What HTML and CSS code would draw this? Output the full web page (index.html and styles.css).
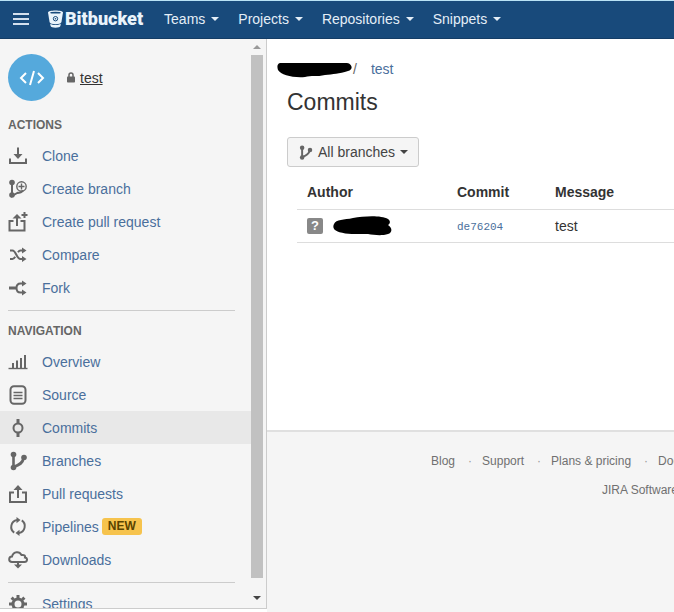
FILE: index.html
```
<!DOCTYPE html>
<html lang="en">
<head>
    <meta charset="UTF-8">
    <meta name="viewport" content="width=device-width, initial-scale=1.0">
    <title>test / Commits - Bitbucket</title>
    <link rel="stylesheet" href="styles.css">
</head>
<body>
    <header class="header">
        <button class="menu-button" aria-label="Menu">
            <svg width="18" height="14" viewBox="0 0 18 14" fill="none" stroke="#d3e0ee" stroke-width="2"><path d="M1 2h16M1 7h16M1 12h16"/></svg>
        </button>
        <a class="logo" href="#">
            <svg width="15" height="18" viewBox="0 0 15 18" fill="#eaf4fb">
                <path d="M0 2.6C0 1.2 3.4.5 7.5.5S15 1.2 15 2.6l-1.6 9.6c-.3 1.2-2.8 2-5.9 2s-5.600-.8-5.900-2z"/>
                <path d="M2.200 13.700c1.200.9 3.200 1.300 5.300 1.300s4.100-.4 5.300-1.300l-.4 2.400c-.2 1-2.400 1.700-4.900 1.700s-4.700-.7-4.900-1.700z"/>
                <ellipse cx="7.500" cy="2.700" rx="5.300" ry=".9" fill="#184a7b"/>
                <circle cx="7.500" cy="8.700" r="2.200" fill="none" stroke="#184a7b" stroke-width="1"/>
                <circle cx="7.500" cy="8.700" r=".8" fill="#184a7b"/>
            </svg>
            <span>Bitbucket</span>
        </a>
        <nav class="menu">
            <button class="menu-item">Teams</button>
            <button class="menu-item">Projects</button>
            <button class="menu-item">Repositories</button>
            <button class="menu-item">Snippets</button>
        </nav>
    </header>

    <div class="page">
        <aside class="sidebar">
            <div class="sidebar-body">
                <div class="repo">
                    <span class="avatar">
                        <svg width="26" height="16" viewBox="0 0 26 16" fill="none" stroke="#fff" stroke-width="2"><path d="M7 3L2 8l5 5M19 3l5 5-5 5M15 1l-4 14"/></svg>
                    </span>
                    <svg width="8" height="11" viewBox="0 0 8 11"><path d="M2 5V3a2 2 0 0 1 4 0v2" fill="none" stroke="#666" stroke-width="1.500"/><rect y="4.500" width="8" height="6" rx=".8" fill="#666"/></svg>
                    <a class="repo-name" href="#">test</a>
                </div>

                <h2 class="group-title">Actions</h2>
                <ul class="nav-list">
                    <li><a class="nav-link" href="#">
                        <svg class="icon" viewBox="0 0 20 20"><path d="M2 12.500V17h16v-4.500M10 1.500v9"/><path class="solid" d="M5.500 8h9L10 13z"/></svg>Clone</a></li>
                    <li><a class="nav-link" href="#">
                        <svg class="icon" viewBox="0 0 20 20"><path d="M4 4v13l6-3.500"/><circle class="solid" cx="4" cy="3.500" r="2.800"/><circle class="solid" cx="4" cy="16" r="2.800"/><circle class="thin" cx="13.500" cy="7.500" r="4.700"/><path class="thin" d="M13.500 4.500v6M10.500 7.500h6"/><path d="M9 14c3 0 5-1 6-2.500"/></svg>Create branch</a></li>
                    <li><a class="nav-link" href="#">
                        <svg class="icon" viewBox="0 0 20 20"><path d="M5.500 9H1.500v9.500h15V9h-4M9 14V5"/><path class="solid" d="M4.500 6.500L9 2l4.500 4.500z"/><path d="M16.500 0v6M13.500 3h6"/></svg>Create pull request</a></li>
                    <li><a class="nav-link" href="#">
                        <svg class="icon" viewBox="0 0 20 20"><path d="M2 5.500h2.500c3.500 0 4 8.500 8 8.500H15M2 14h2.500c1.200 0 2-1 2.700-2.200M10 7.200C10.700 6.200 11.500 5.500 12.500 5.500H15"/><path class="solid" d="M14 2.500l4.500 3-4.500 3zM14 11l4.500 3-4.500 3z"/></svg>Compare</a></li>
                    <li><a class="nav-link" href="#">
                        <svg class="icon" viewBox="0 0 20 20"><path d="M15 5.500h-2.500c-3 0-4 2-4 4.500s1 4.500 4 4.500H15"/><path class="thick" d="M1 10h7.500"/><path class="solid" d="M14 2.500l4.500 3-4.500 3zM14 11.500l4.500 3-4.500 3z"/></svg>Fork</a></li>
                </ul>
                <hr class="divider">

                <h2 class="group-title">Navigation</h2>
                <ul class="nav-list">
                    <li><a class="nav-link" href="#">
                        <svg class="icon" viewBox="0 0 20 20"><path class="thin" d="M.5 16.500h19"/><path d="M5 16v-5M9 16V8.500M13 16V6M17 16V3"/></svg>Overview</a></li>
                    <li><a class="nav-link" href="#">
                        <svg class="icon" viewBox="0 0 20 20"><rect x="2.500" y="1.200" width="15" height="17.500" rx="3.500"/><path class="thin" d="M5.500 7.500h9M5.500 10.500h9M5.500 13.500h9"/></svg>Source</a></li>
                    <li><a class="nav-link active" href="#" aria-current="page">
                        <svg class="icon" viewBox="0 0 20 20"><circle cx="10" cy="10" r="4.500"/><path class="thick" d="M10 1v4.500M10 14.500V19"/></svg>Commits</a></li>
                    <li><a class="nav-link" href="#">
                        <svg class="icon" viewBox="0 0 20 20"><path class="branch" d="M5.500 4v12c6-2 9.500-4 10-9"/><circle class="solid" cx="5.500" cy="3.500" r="2.800"/><circle class="solid" cx="5.500" cy="16.500" r="2.800"/><circle class="solid" cx="16" cy="6.500" r="2.800"/></svg>Branches</a></li>
                    <li><a class="nav-link" href="#">
                        <svg class="icon" viewBox="0 0 20 20"><path d="M6 8.500H2V18h16V8.500h-4M10 14V5"/><path class="solid" d="M5.500 6L10 1l4.500 5z"/></svg>Pull requests</a></li>
                    <li><a class="nav-link" href="#">
                        <svg class="icon" viewBox="0 0 20 20"><path d="M6.200 15.600A7 7 0 0 1 9 3M13.800 3.400A7 7 0 0 1 11 16"/><path class="solid" d="M8.500 0l4 3-4 3.200zM11.500 12.800v6.200l-4-3z"/></svg>Pipelines<span class="badge">New</span></a></li>
                    <li><a class="nav-link" href="#">
                        <svg class="icon" viewBox="0 0 20 20"><path d="M7 12H4a2.800 2.800 0 0 1 0-5.600C5.500 1 11.500 1 13.500 5c3-.5 4 1 3.500 2.500 3 .5 2.500 4.500-.5 4.500H13M5.500 12h9M10 12v4"/><path class="solid" d="M6 14.500h8L10 18.500z"/></svg>Downloads</a></li>
                </ul>
                <hr class="divider">

                <ul class="nav-list">
                    <li><a class="nav-link" href="#">
                        <svg class="icon" viewBox="0 0 20 20"><circle class="thick" cx="10" cy="10" r="5"/><path class="thick" d="M10 1v3M10 16v3M1 10h3M16 10h3M3.600 3.600l2.200 2.200M14.200 14.200l2.200 2.200M3.600 16.400l2.200-2.200M14.200 5.800l2.200-2.200"/></svg>Settings</a></li>
                </ul>
            </div>
            <div class="scrollbar" aria-hidden="true">
                <span class="arrow-up"></span>
                <span class="thumb"></span>
                <span class="arrow-down"></span>
            </div>
        </aside>

        <div class="content">
            <main class="main">
                <div class="breadcrumbs">
                    <svg width="75" height="16" viewBox="0 0 75 16"><path d="M3 1h67c6 1 6 7 1 8-9 3-15 3-23 4-8 2-14 0-20 2C16 16 4 13 1 8 0 5 0 2 3 1z"/></svg>
                    <span class="slash">/</span>
                    <a href="#">test</a>
                </div>
                <h1>Commits</h1>
                <button class="branch-button">
                    <svg class="icon-small" viewBox="0 0 20 20"><path class="branch" d="M5.500 4v12c6-2 9.500-4 10-9"/><circle class="solid" cx="5.500" cy="3.500" r="3"/><circle class="solid" cx="5.500" cy="16.500" r="3"/><circle class="solid" cx="16" cy="6.500" r="3"/></svg>
                    All branches
                </button>
                <table class="commits">
                    <thead>
                        <tr>
                            <th class="author">Author</th>
                            <th class="commit">Commit</th>
                            <th>Message</th>
                        </tr>
                    </thead>
                    <tbody>
                        <tr>
                            <td>
                                <div class="user">
                                    <span class="user-icon">?</span>
                                    <svg width="59" height="20" viewBox="0 0 59 20"><path d="M1 8C3 3 11 4 20 2 31 0 48-1 55 3c3 2 2 5 0 6 5 3 4 8 0 9-6 2-14 1-20 0-10 0-26 1-33-4C0 12 0 10 1 8z"/></svg>
                                </div>
                            </td>
                            <td><a class="hash" href="#">de76204</a></td>
                            <td>test</td>
                        </tr>
                    </tbody>
                </table>
            </main>

            <footer class="footer">
                <ul class="footer-links">
                    <li><a href="#">Blog</a></li>
                    <li><a href="#">Support</a></li>
                    <li><a href="#">Plans &amp; pricing</a></li>
                    <li><a href="#">Documentation</a></li>
                </ul>
                <ul class="footer-links products">
                    <li><a href="#">JIRA Software</a></li>
                </ul>
            </footer>
        </div>
    </div>
</body>
</html>
```
FILE: styles.css
```
* {
    box-sizing: border-box;
}

body {
    margin: 0;
    height: 100vh;
    display: flex;
    flex-direction: column;
    overflow: hidden;
    font-family: "Liberation Sans", Arial, sans-serif;
    font-size: 14px;
    line-height: 20px;
    color: #333;
    background: #fff;
}

a {
    color: #4a6f9c;
    text-decoration: none;
}

button {
    font: inherit;
    cursor: pointer;
}

ul {
    list-style: none;
    margin: 0;
    padding: 0;
}

/* Header */
.header {
    display: flex;
    align-items: center;
    flex: none;
    height: 39px;
    padding: 0 0 2px 12px;
    background: #184a7b;
    border-top: 1px solid #b9e2f5;
    border-bottom: 1px solid #143d66;
}

.menu-button {
    display: flex;
    padding: 0;
    border: none;
    background: none;
}

.logo {
    display: flex;
    align-items: center;
    gap: 2px;
    margin-left: 18px;
    font-family: Roboto, sans-serif;
    font-size: 18px;
    font-weight: 900;
    color: #eaf4fb;
}

.menu {
    display: flex;
    gap: 19px;
    margin-left: 21px;
}

.menu-item {
    display: flex;
    align-items: center;
    gap: 6px;
    padding: 0;
    border: none;
    background: none;
    color: #e4eef7;
}

.menu-item::after,
.branch-button::after {
    content: "";
    border: 4px solid transparent;
    border-top-color: currentColor;
    border-bottom: none;
}

/* Sidebar */
.page {
    display: flex;
    flex: 1;
    min-height: 0;
}

.sidebar {
    display: flex;
    flex: none;
    width: 267px;
    margin-bottom: 3px;
    background: #f5f5f5;
    border-right: 1px solid #ccc;
    border-bottom: 1px solid #ccc;
    overflow: hidden;
}

.sidebar-body {
    flex: 1;
    padding-top: 15px;
}

.repo {
    display: flex;
    align-items: center;
    padding-left: 8px;
}

.avatar {
    display: flex;
    align-items: center;
    justify-content: center;
    width: 47px;
    height: 47px;
    margin-right: 12px;
    border-radius: 50%;
    background: #55a9dc;
}

.repo-name {
    margin-left: 5px;
    color: #333;
    text-decoration: underline;
}

.group-title {
    margin: 16px 8px 6px;
    font-size: 12px;
    line-height: 16px;
    text-transform: uppercase;
    color: #666;
}

.divider {
    margin: 6px 16px 0 8px;
    border: none;
    border-top: 1px solid #ccc;
}

.divider + .group-title {
    margin-top: 12px;
}

.divider + .nav-list {
    margin-top: 4px;
}

.nav-link {
    display: flex;
    align-items: center;
    height: 33px;
    padding-left: 8px;
}

.nav-link.active {
    background: #e8e8e8;
}

.icon,
.icon-small {
    width: 20px;
    height: 20px;
    margin-right: 14px;
    fill: none;
    stroke: #666;
    stroke-width: 2;
}

.icon-small {
    width: 15px;
    height: 15px;
    margin: 0;
}

.solid {
    fill: #666;
    stroke: none;
}

.thin {
    stroke-width: 1.4;
}

.branch {
    stroke-width: 2.6;
}

.thick {
    stroke-width: 3;
}

.badge {
    margin-left: 3px;
    padding: 0 6px;
    border-radius: 3px;
    font-size: 12px;
    font-weight: bold;
    line-height: 17px;
    text-transform: uppercase;
    color: #594300;
    background: #f6c34d;
}

.scrollbar {
    display: flex;
    flex-direction: column;
    align-items: center;
    width: 15px;
    padding-right: 3px;
}

.arrow-up,
.arrow-down {
    border: 4px solid transparent;
}

.arrow-up {
    margin: 6px 0;
    border-top: none;
    border-bottom-color: #999;
}

.arrow-down {
    margin: 18px 0 8px;
    border-bottom: none;
    border-top-color: #444;
}

.thumb {
    flex: 1;
    width: 12px;
    background: #c1c1c1;
}

/* Content */
.content {
    display: flex;
    flex-direction: column;
    flex: 1;
    min-width: 0;
}

.main {
    padding: 20px 0 187px 20px;
}

.breadcrumbs {
    display: flex;
    align-items: center;
    margin-left: -10px;
}

.breadcrumbs svg {
    margin-top: 2px;
}

.slash {
    margin: 0 14px 0 1px;
    color: #666;
}

h1 {
    margin: 8px 0 20px;
    font-size: 23px;
    font-weight: normal;
    line-height: 30px;
}

.branch-button {
    display: flex;
    align-items: center;
    gap: 5px;
    height: 30px;
    padding: 0 10px;
    border: 1px solid #ccc;
    border-radius: 3px;
    color: #444;
    background: #f5f5f5;
}

.commits {
    width: calc(100% - 10px);
    margin: 9px 0 0 10px;
    table-layout: fixed;
    border-collapse: collapse;
    text-align: left;
}

.commits th,
.commits td {
    height: 33px;
    padding: 0 10px;
    border-bottom: 1px solid #ddd;
}

.commits .author {
    width: 150px;
}

.commits .commit {
    width: 98px;
}

.user {
    display: flex;
    align-items: center;
    gap: 10px;
}

.user-icon {
    width: 16px;
    border-radius: 2px;
    font-size: 13px;
    font-weight: bold;
    line-height: 16px;
    text-align: center;
    color: #fff;
    background: #888;
}

.hash {
    font-family: "Liberation Mono", monospace;
    font-size: 11px;
}

/* Footer */
.footer {
    flex: 1;
    padding: 19px 0 0 164px;
    border-top: 2px solid #e0e0e0;
    background: #f5f5f5;
    overflow: hidden;
}

.footer-links {
    display: flex;
    font-size: 12px;
    white-space: nowrap;
}

.footer-links a {
    color: #707070;
}

.footer-links li + li::before {
    content: "·";
    margin: 0 10px 0 13px;
    color: #999;
}

.products {
    margin: 9px 0 0 171px;
}
```
